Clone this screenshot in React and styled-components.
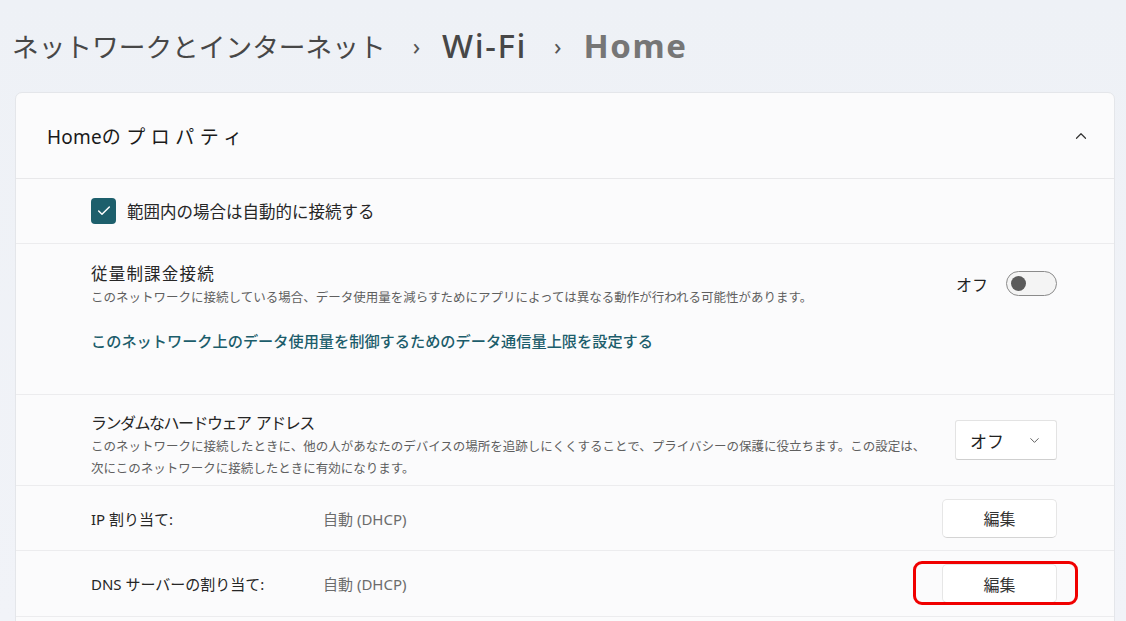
import React from "react";
import styled, { createGlobalStyle } from "styled-components";
import { ChevronUp, ChevronDown, Check } from "lucide-react";

const GlobalStyle = createGlobalStyle`
  html, body {
    margin: 0;
    padding: 0;
    height: 621px;
    overflow: hidden;
  }
  body {
    background: linear-gradient(180deg, #eef1f6 0%, #f1f3f8 100%);
    font-family: "Noto Sans", "Noto Sans CJK JP", sans-serif;
    color: #1b1b1b;
  }
`;

const Page = styled.div`
  display: flex;
  flex-direction: column;
  padding: 0 11px 0 15px;
`;

const Breadcrumb = styled.h1`
  display: flex;
  align-items: center;
  height: 90px;
  margin: 0 0 2px -3px;
  font-weight: 500;
  color: #4e4e4e;
`;

const Crumb = styled.span`
  font-weight: ${({ $current, $latin }) => ($current ? 700 : $latin ? 500 : 400)};
  color: ${({ $current }) => ($current ? "#767676" : "#474747")};
  font-size: ${({ $latin }) => ($latin ? "33px" : "26.7px")};
  letter-spacing: ${({ $latin }) => ($latin ? "1.6px" : "0")};
`;

const Sep = styled.span`
  margin: 0 22px 0 27px;
  font-size: 24px;
  color: #555;
  font-weight: 400;
`;

const Card = styled.section`
  background: #fbfbfc;
  border: 1px solid #e4e6ea;
  border-radius: 7px;
  display: flex;
  flex-direction: column;
`;

const CardHeader = styled.div`
  height: 85px;
  display: flex;
  align-items: center;
  justify-content: space-between;
  padding: 0 24px 0 31px;
  border-bottom: 1px solid #e8e8ea;
  font-size: 19px;
  color: #1a1a1a;
`;

const HeaderTitle = styled.span`
  letter-spacing: 0.2px;
  span {
    letter-spacing: 5.5px;
  }
`;

const Row = styled.div`
  min-height: ${({ $h }) => $h}px;
  box-sizing: border-box;
  display: flex;
  align-items: ${({ $top }) => ($top ? "flex-start" : "center")};
  gap: 20px;
  padding: ${({ $pad }) => $pad || "0"} 57px 0 75px;
  border-bottom: 1px solid #ececee;
`;

const Box = styled.span`
  width: 25px;
  height: 26px;
  border-radius: 4px;
  background: #1d5f6c;
  display: inline-flex;
  align-items: center;
  justify-content: center;
  color: #fff;
  margin-right: -9px;
`;

const Label = styled.span`
  font-size: ${({ $size }) => $size || 16}px;
  color: #262626;
  letter-spacing: ${({ $ls }) => $ls || 0}px;
`;

const TextCol = styled.div`
  flex: 1;
  display: flex;
  flex-direction: column;
`;

const Desc = styled.p`
  margin: 2px 0 0;
  font-size: 12.5px;
  line-height: 22px;
  color: #5f5f5f;
`;

const Link = styled.a`
  margin-top: 20px;
  font-size: 15.2px;
  color: #1c5d6b;
  font-weight: 500;
  text-decoration: none;
`;

const Control = styled.div`
  display: flex;
  align-items: center;
  gap: 18px;
  margin-top: ${({ $offset }) => $offset || 0}px;
  font-size: 16px;
  color: #222;
`;

const Toggle = styled.span`
  width: 51px;
  height: 25px;
  box-sizing: border-box;
  border: 1.5px solid #8b8b8b;
  border-radius: 13px;
  background: #f4f4f4;
  display: flex;
  align-items: center;
  padding: 0 4px;
  &::before {
    content: "";
    width: 15px;
    height: 15px;
    border-radius: 50%;
    background: #5b5b5b;
  }
`;

const Select = styled.div`
  width: 102px;
  height: 40px;
  margin-top: -10px;
  box-sizing: border-box;
  background: #fff;
  border: 1px solid #e3e3e3;
  border-bottom-color: #cfcfcf;
  border-radius: 3px;
  display: flex;
  align-items: center;
  justify-content: space-between;
  padding: 0 14px 0 14px;
  font-size: 17px;
  color: #222;
`;

const InfoLabel = styled.span`
  width: 212px;
  font-size: 15px;
  color: #262626;
`;

const InfoValue = styled.span`
  flex: 1;
  font-size: 15px;
  color: #6c6c6c;
`;

const Button = styled.button`
  width: 115px;
  height: 39px;
  background: #fff;
  border: 1px solid #e6e6e6;
  border-bottom-color: #d4d4d4;
  border-radius: 5px;
  font-family: inherit;
  font-size: 16px;
  color: #333;
`;

const Highlight = styled.div`
  position: relative;
  display: flex;
  &::after {
    content: "";
    position: absolute;
    inset: -3px -21px -2px -29px;
    border: 3px solid #f00000;
    border-radius: 9px;
    pointer-events: none;
  }
`;

export default function App() {
  return (
    <>
      <GlobalStyle />
      <Page>
        <Breadcrumb>
          <Crumb>ネットワークとインターネット</Crumb>
          <Sep>›</Sep>
          <Crumb $latin>Wi-Fi</Crumb>
          <Sep>›</Sep>
          <Crumb $latin $current>Home</Crumb>
        </Breadcrumb>

        <Card>
          <CardHeader>
            <HeaderTitle>
              Home<span>のプロパティ</span>
            </HeaderTitle>
            <ChevronUp size={18} strokeWidth={1.6} color="#333" />
          </CardHeader>

          <Row $h={65}>
            <Box>
              <Check size={16} strokeWidth={2.2} />
            </Box>
            <Label $size={16.5}>範囲内の場合は自動的に接続する</Label>
          </Row>

          <Row $h={151} $top $pad="17px">
            <TextCol>
              <Label $size={16.5} $ls={1.2}>従量制課金接続</Label>
              <Desc>
                このネットワークに接続している場合、データ使用量を減らすためにアプリによっては異なる動作が行われる可能性があります。
              </Desc>
              <Link href="#">
                このネットワーク上のデータ使用量を制御するためのデータ通信量上限を設定する
              </Link>
            </TextCol>
            <Control $offset={10}>
              オフ
              <Toggle />
            </Control>
          </Row>

          <Row $h={91} $pad="10px">
            <TextCol>
              <Label $size={16} $ls={-1.5}>ランダムなハードウェア&nbsp;&nbsp;アドレス</Label>
              <Desc>
                このネットワークに接続したときに、他の人があなたのデバイスの場所を追跡しにくくすることで、プライバシーの保護に役立ちます。この設定は、
                <br />
                次にこのネットワークに接続したときに有効になります。
              </Desc>
            </TextCol>
            <Select>
              オフ
              <ChevronDown size={15} strokeWidth={1.5} color="#555" />
            </Select>
          </Row>

          <Row $h={65}>
            <InfoLabel>IP 割り当て:</InfoLabel>
            <InfoValue>自動 (DHCP)</InfoValue>
            <Button>編集</Button>
          </Row>

          <Row $h={66}>
            <InfoLabel>DNS サーバーの割り当て:</InfoLabel>
            <InfoValue>自動 (DHCP)</InfoValue>
            <Highlight>
              <Button>編集</Button>
            </Highlight>
          </Row>

          <Row $h={60} />
        </Card>
      </Page>
    </>
  );
}
